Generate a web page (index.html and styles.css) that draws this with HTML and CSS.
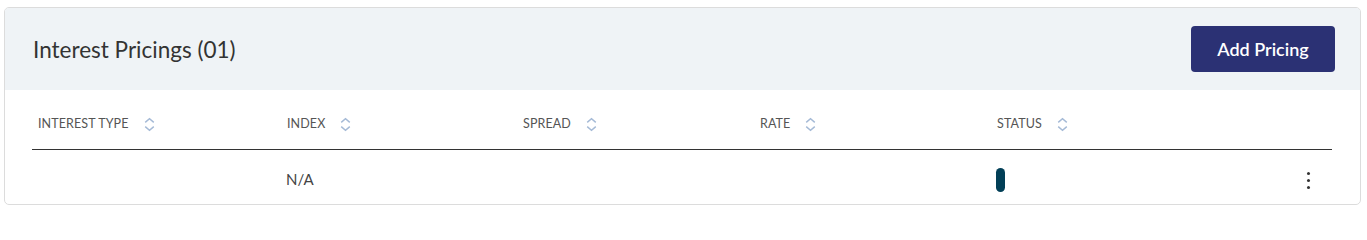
FILE: index.html
```html
<!DOCTYPE html>
<html>
<head>
<meta charset="utf-8">
<link rel="stylesheet" href="styles.css">
</head>
<body>
<div class="card">
  <div class="card-head">
    <h2 class="title">Interest Pricings (01)</h2>
    <button class="btn">Add Pricing</button>
  </div>
  <div class="table">
    <div class="row head">
      <div class="cell">INTEREST TYPE <svg class="sort" viewBox="0 0 10 14"><path d="M1 5 L5 1.5 L9 5 M1 9 L5 12.5 L9 9"/></svg></div>
      <div class="cell">INDEX <svg class="sort" viewBox="0 0 10 14"><path d="M1 5 L5 1.5 L9 5 M1 9 L5 12.5 L9 9"/></svg></div>
      <div class="cell">SPREAD <svg class="sort" viewBox="0 0 10 14"><path d="M1 5 L5 1.5 L9 5 M1 9 L5 12.5 L9 9"/></svg></div>
      <div class="cell">RATE <svg class="sort" viewBox="0 0 10 14"><path d="M1 5 L5 1.5 L9 5 M1 9 L5 12.5 L9 9"/></svg></div>
      <div class="cell">STATUS <svg class="sort" viewBox="0 0 10 14"><path d="M1 5 L5 1.5 L9 5 M1 9 L5 12.5 L9 9"/></svg></div>
      <div class="cell"></div>
    </div>
    <div class="row body">
      <div class="cell"></div>
      <div class="cell">N/A</div>
      <div class="cell"></div>
      <div class="cell"></div>
      <div class="cell"><span class="pill"></span></div>
      <div class="cell actions"><span class="kebab"><i></i><i></i><i></i></span></div>
    </div>
  </div>
</div>
</body>
</html>
```
FILE: styles.css
```css
* { box-sizing: border-box; }
body {
  margin: 0;
  padding: 7px 6px 0 4px;
  background: #fff;
  font-family: "Lato", "Liberation Sans", sans-serif;
}
.card {
  border: 1px solid #dcdcdc;
  border-radius: 5px;
  height: 198px;
  overflow: hidden;
  background: #fff;
}
.card-head {
  background: #eff3f6;
  height: 82px;
  display: flex;
  align-items: center;
  justify-content: space-between;
  padding: 0 25px 0 28px;
}
.title {
  margin: 0;
  font-weight: 400;
  font-size: 22.5px;
  color: #333;
}
.btn {
  height: 46px;
  width: 144px;
  border: none;
  border-radius: 4px;
  background: #2b3174;
  color: #fff;
  font-family: inherit;
  font-size: 18px;
  font-weight: 600;
  padding: 0;
}
.table {
  padding: 0 28px 0 27px;
}
.row {
  display: grid;
  grid-template-columns: 249px 236px 237px 237px 1fr 60px;
}
.row.head {
  border-bottom: 1.5px solid #333;
}
.row.head .cell {
  padding: 25px 6px 16px;
  line-height: 18px;
  font-size: 12.5px;
  color: #555;
  display: flex;
  align-items: center;
  letter-spacing: 0.1px;
}
.sort {
  width: 11px;
  height: 15px;
  margin-left: 15px;
  fill: none;
  stroke: #a5bad6;
  stroke-width: 1.3;
}
.row.body .cell {
  padding: 18px 6px 0 5px;
  height: 54px;
  font-size: 15px;
  line-height: 22px;
  color: #444;
}
.pill {
  display: block;
  width: 9px;
  height: 24px;
  border-radius: 5px;
  background: #023f57;
  margin-top: 0;
}
.actions {
  display: flex;
  justify-content: flex-end;
}
.kebab {
  display: flex;
  flex-direction: column;
  gap: 4px;
  margin-top: 4px;
  margin-right: 16px;
}
.kebab i {
  display: block;
  width: 3px;
  height: 3px;
  border-radius: 50%;
  background: #333;
}
```
